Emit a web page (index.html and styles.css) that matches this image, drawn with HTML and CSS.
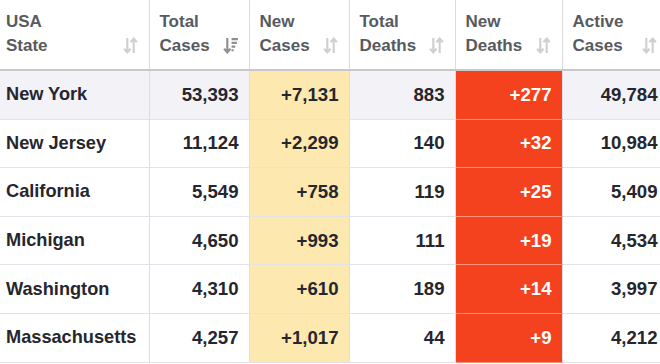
FILE: index.html
```html
<!DOCTYPE html>
<html>
<head>
<meta charset="utf-8">
<link rel="stylesheet" href="styles.css">
</head>
<body>
<table class="covid">
  <colgroup>
    <col class="c-state"><col class="c-num"><col class="c-num"><col class="c-wide"><col class="c-red"><col class="c-wide">
  </colgroup>
  <thead>
    <tr>
      <th><div class="hcell"><span>USA<br>State</span><svg class="sort" viewBox="0 0 14 16"><path d="M4 1v13M1 11l3 3.5 3-3.5M10 15V2M7 5l3-3.5 3 3.5"/></svg></div></th>
      <th><div class="hcell"><span>Total<br>Cases</span><svg class="sort active" viewBox="0 0 14 16"><path d="M4 1v13M1 11l3 3.5 3-3.5"/><path class="bars" d="M8 2h6M8 5.5h5M8 9h3.5M8 12.5h2"/></svg></div></th>
      <th><div class="hcell"><span>New<br>Cases</span><svg class="sort" viewBox="0 0 14 16"><path d="M4 1v13M1 11l3 3.5 3-3.5M10 15V2M7 5l3-3.5 3 3.5"/></svg></div></th>
      <th><div class="hcell"><span>Total<br>Deaths</span><svg class="sort" viewBox="0 0 14 16"><path d="M4 1v13M1 11l3 3.5 3-3.5M10 15V2M7 5l3-3.5 3 3.5"/></svg></div></th>
      <th><div class="hcell"><span>New<br>Deaths</span><svg class="sort" viewBox="0 0 14 16"><path d="M4 1v13M1 11l3 3.5 3-3.5M10 15V2M7 5l3-3.5 3 3.5"/></svg></div></th>
      <th><div class="hcell"><span>Active<br>Cases</span><svg class="sort" viewBox="0 0 14 16"><path d="M4 1v13M1 11l3 3.5 3-3.5M10 15V2M7 5l3-3.5 3 3.5"/></svg></div></th>
    </tr>
  </thead>
  <tbody>
    <tr class="hl">
      <td class="state">New York</td><td>53,393</td><td class="new">+7,131</td><td>883</td><td class="dead">+277</td><td>49,784</td>
    </tr>
    <tr>
      <td class="state">New Jersey</td><td>11,124</td><td class="new">+2,299</td><td>140</td><td class="dead">+32</td><td>10,984</td>
    </tr>
    <tr>
      <td class="state">California</td><td>5,549</td><td class="new">+758</td><td>119</td><td class="dead">+25</td><td>5,409</td>
    </tr>
    <tr>
      <td class="state">Michigan</td><td>4,650</td><td class="new">+993</td><td>111</td><td class="dead">+19</td><td>4,534</td>
    </tr>
    <tr>
      <td class="state">Washington</td><td>4,310</td><td class="new">+610</td><td>189</td><td class="dead">+14</td><td>3,997</td>
    </tr>
    <tr>
      <td class="state">Massachusetts</td><td>4,257</td><td class="new">+1,017</td><td>44</td><td class="dead">+9</td><td>4,212</td>
    </tr>
  </tbody>
</table>
</body>
</html>
```

FILE: styles.css
```css
html, body {
  margin: 0;
  padding: 0;
  background: #ffffff;
  overflow: hidden;
}

.covid {
  border-collapse: collapse;
  table-layout: fixed;
  width: 668px;
  font-family: "Liberation Sans", Arial, sans-serif;
  font-weight: bold;
}

.c-state { width: 149px; }
.c-num { width: 100px; }
.c-wide { width: 106px; }
.c-red { width: 107px; }

.covid th {
  height: 69px;
  padding: 0 11px 0 10px;
  border-right: 1px solid #dcdcdf;
  border-bottom: 2px solid #c9c9cc;
  text-align: left;
  vertical-align: top;
  color: #575a5f;
  font-size: 17px;
  line-height: 24px;
}

.covid th:first-child { padding-left: 6px; }

.hcell {
  display: flex;
  justify-content: space-between;
  align-items: flex-end;
  padding-top: 10px;
}

.sort {
  width: 15px;
  height: 17px;
  margin-bottom: 4px;
  fill: none;
  stroke: #cfcfd3;
  stroke-width: 2;
}

.sort.active { stroke: #8e8e93; }
.sort .bars { stroke-width: 2; }

.covid td {
  height: 47.6px;
  padding: 0 10px;
  border-right: 1px solid #dcdce2;
  border-bottom: 1px solid #e2e2ea;
  text-align: right;
  color: #26262e;
  font-size: 18.6px;
}

.covid td.state {
  text-align: left;
  padding-left: 6px;
  font-size: 18.2px;
}

.covid tr.hl td { background: #f3f2f7; }
.covid td.new, .covid tr.hl td.new { background: #fde9b0; }
.covid td.dead, .covid tr.hl td.dead {
  background: #f5421e;
  color: #ffffff;
  border-bottom-color: #f7937c;
}
```
